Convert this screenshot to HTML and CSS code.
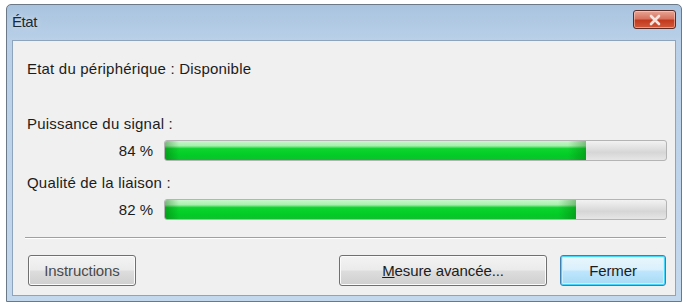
FILE: index.html
```html
<!DOCTYPE html>
<html lang="fr">
<head>
<meta charset="utf-8">
<title>État</title>
<link rel="stylesheet" href="styles.css">
</head>
<body>
<div class="window">
  <div class="titlebar">
    <span class="title">État</span>
    <button class="close" aria-label="Fermer">
      <svg width="14" height="12" viewBox="0 0 14 12"><path d="M3 2 L11 10 M11 2 L3 10" stroke="#f4e4e0" stroke-width="2.6" stroke-linecap="round"/></svg>
    </button>
  </div>
  <div class="client">
    <div class="status">Etat du périphérique : Disponible</div>
    <div class="group">
      <div class="label">Puissance du signal :</div>
      <div class="meter-row">
        <span class="pct">84 %</span>
        <div class="bar"><div class="fill" style="width:84%"></div></div>
      </div>
    </div>
    <div class="group second">
      <div class="label">Qualité de la liaison :</div>
      <div class="meter-row">
        <span class="pct">82 %</span>
        <div class="bar"><div class="fill" style="width:82%"></div></div>
      </div>
    </div>
    <div class="sep"></div>
    <div class="buttons">
      <button class="btn btn-instr">Ins<u>t</u>ructions</button>
      <div class="right-btns">
        <button class="btn btn-mesure"><u>M</u>esure avancée...</button>
        <button class="btn btn-fermer">Fermer</button>
      </div>
    </div>
  </div>
</div>
</body>
</html>
```
FILE: styles.css
```css
html, body {
  margin: 0;
  padding: 0;
  background: #ffffff;
}
body {
  padding: 4px 0 0 6px;
  font-family: "Liberation Sans", Arial, sans-serif;
  font-size: 15px;
  color: #1c1c1c;
}
.window {
  box-sizing: border-box;
  width: 676px;
  height: 298px;
  border: 1px solid #6b7888;
  border-radius: 5px 5px 0 0;
  background: linear-gradient(to bottom, #a9c3df 0%, #b9d0e8 12%, #c4d8ed 100%);
  padding: 0 5px 5px 5px;
  display: flex;
  flex-direction: column;
}
.titlebar {
  height: 35px;
  display: flex;
  align-items: center;
  justify-content: space-between;
  padding-left: 0;
}
.title {
  font-family: "Liberation Sans", Arial, sans-serif;
  font-size: 15px;
  color: #1a2a3a;
  letter-spacing: -0.4px;
  margin-top: -2px;
  text-shadow: 0 0 6px rgba(255,255,255,0.6);
}
.close {
  width: 43px;
  height: 19px;
  margin-top: -6px;
  margin-right: 0;
  border: 1px solid #5a2a24;
  border-radius: 3px;
  background: linear-gradient(to bottom, #e7a595 0%, #d8735f 45%, #c2391e 55%, #d25a3a 100%);
  box-shadow: inset 0 0 0 1px rgba(255,220,210,0.5);
  display: flex;
  align-items: center;
  justify-content: center;
  padding: 0;
}
.client {
  flex: 1;
  background: #f0f0f0;
  border: 1px solid #8ea4bc;
  padding: 19px 7px 0 14px;
  display: flex;
  flex-direction: column;
}
.status {
  line-height: 18px;
  letter-spacing: 0.2px;
}
.group {
  margin-top: 37px;
}
.group.second {
  margin-top: 13px;
}
.label {
  line-height: 18px;
  letter-spacing: 0.2px;
}
.meter-row {
  display: flex;
  align-items: center;
  margin-top: 7px;
}
.pct {
  width: 126px;
  text-align: right;
  padding-right: 11px;
  line-height: 18px;
  letter-spacing: 0;
}
.bar {
  flex: 1;
  height: 19px;
  border: 1px solid #b4b4b4;
  border-radius: 3px;
  background: linear-gradient(to bottom, #f2f2f2 0%, #e0e0e0 40%, #d6d6d6 60%, #e6e6e6 100%);
  overflow: hidden;
  margin-right: 1px;
}
.fill {
  height: 100%;
  background:
    linear-gradient(to right, rgba(0,80,0,0.35) 0px, rgba(0,0,0,0) 14px, rgba(0,0,0,0) calc(100% - 18px), rgba(0,90,0,0.35) 100%),
    linear-gradient(to bottom, #c9f7cb 0%, #a8f0ad 25%, #0ed42f 40%, #02cc26 75%, #10c030 100%);
}
.sep {
  margin-top: 17px;
  height: 0;
  border-top: 1px solid #a0a0a0;
  border-bottom: 1px solid #ffffff;
  margin-right: 2px;
  margin-left: -2px;
}
.buttons {
  display: flex;
  justify-content: space-between;
  margin-top: 16px;
}
.right-btns {
  display: flex;
  gap: 13px;
}
.btn {
  height: 31px;
  border: 1px solid #707070;
  border-radius: 3px;
  background: linear-gradient(to bottom, #f3f3f3 0%, #ebebeb 48%, #dddddd 52%, #cfcfcf 100%);
  box-shadow: inset 0 0 0 1px #fbfbfb;
  font-family: "Liberation Sans", Arial, sans-serif;
  font-size: 15px;
  color: #1c1c1c;
  padding: 0;
  letter-spacing: -0.1px;
}
.btn u {
  text-decoration: underline;
}
.btn-instr {
  width: 108px;
  margin-left: 1px;
  color: #4a4a4a;
}
.btn-instr u {
  text-decoration: none;
}
.btn-mesure {
  width: 208px;
}
.btn-fermer {
  width: 106px;
  margin-right: 2px;
  border-color: #3c7fb1;
  background: linear-gradient(to bottom, #eaf6fd 0%, #d9f0fc 48%, #bee6fd 52%, #a7d9f5 100%);
  box-shadow: inset 0 0 0 1px #48d5f9, inset 0 0 0 2px #cdeefc;
}
```
